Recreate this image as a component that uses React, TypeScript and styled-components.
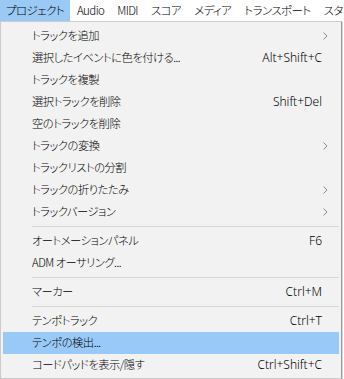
import React from "react";
import styled, { createGlobalStyle } from "styled-components";

const GlobalStyle = createGlobalStyle`
  html, body { margin: 0; padding: 0; background: #ffffff; }
  body {
    font-family: "Noto Sans", "Noto Sans CJK JP", sans-serif;
    font-size: 12px;
    color: #000;
  }
`;

const Page = styled.div`
  width: 344px;
  height: 379px;
  overflow: hidden;
  background: #ffffff;
`;

const MenuBar = styled.div`
  display: flex;
  height: 21px;
  align-items: stretch;
  white-space: nowrap;
  background: #ffffff;
`;

const BarItem = styled.div<{ $active?: boolean }>`
  display: flex;
  align-items: center;
  padding: 0 6px;
  margin-right: 1px;
  background: ${(p) => (p.$active ? "#99c9f4" : "transparent")};
  font-family: "Noto Sans CJK JP", "Noto Sans", sans-serif;
  font-weight: 300;
  font-size: 11.5px;
  letter-spacing: -0.6px;
  font-feature-settings: "palt";
  line-height: 1;
`;

const Menu = styled.div`
  width: 342px;
  height: 358px;
  box-sizing: border-box;
  background: #f2f2f2;
  border: 1px solid #cccccc;
  border-right-color: #9a9a9a;
  box-shadow: 1px 1px 0 #d8d8d8;
  padding: 3px 2px;
`;

const Row = styled.div<{ $hot?: boolean }>`
  display: flex;
  align-items: center;
  height: 22px;
  padding: 0 6px 0 29px;
  background: ${(p) => (p.$hot ? "#99c9f6" : "transparent")};
  white-space: nowrap;
`;

const Label = styled.span`
  flex: 1;
  font-family: "Noto Sans CJK JP", "Noto Sans", sans-serif;
  font-weight: 300;
  font-size: 11.3px;
  letter-spacing: -0.5px;
  font-feature-settings: "palt";
  line-height: 1;
`;

const Shortcut = styled.span`
  padding-right: 11px;
  font-family: "Noto Sans", "Open Sans", sans-serif;
  font-weight: 300;
  font-size: 12px;
  line-height: 1;
`;

const Arrow = styled.span`
  display: flex;
  width: 8px;
  justify-content: center;
  margin-right: 4px;
`;

const Separator = styled.div`
  height: 7px;
  display: flex;
  align-items: center;
  padding-left: 29px;
  &::after {
    content: "";
    flex: 1;
    height: 1px;
    background: #d7d7d7;
  }
`;

type Item =
  | { kind: "item"; label: string; shortcut?: string; sub?: boolean; hot?: boolean }
  | { kind: "sep" };

const items: Item[] = [
  { kind: "item", label: "トラックを追加", sub: true },
  { kind: "item", label: "選択したイベントに色を付ける...", shortcut: "Alt+Shift+C" },
  { kind: "item", label: "トラックを複製" },
  { kind: "item", label: "選択トラックを削除", shortcut: "Shift+Del" },
  { kind: "item", label: "空のトラックを削除" },
  { kind: "item", label: "トラックの変換", sub: true },
  { kind: "item", label: "トラックリストの分割" },
  { kind: "item", label: "トラックの折りたたみ", sub: true },
  { kind: "item", label: "トラックバージョン", sub: true },
  { kind: "sep" },
  { kind: "item", label: "オートメーションパネル", shortcut: "F6" },
  { kind: "item", label: "ADM オーサリング..." },
  { kind: "sep" },
  { kind: "item", label: "マーカー", shortcut: "Ctrl+M" },
  { kind: "sep" },
  { kind: "item", label: "テンポトラック", shortcut: "Ctrl+T" },
  { kind: "item", label: "テンポの検出...", hot: true },
  { kind: "item", label: "コードパッドを表示/隠す", shortcut: "Ctrl+Shift+C" },
];

const bar = ["プロジェクト", "Audio", "MIDI", "スコア", "メディア", "トランスポート", "スタジオ"];

const Chevron = () => (
  <svg width="5" height="8" viewBox="0 0 5 8">
    <path d="M0.5 0.5 L4 4 L0.5 7.5" fill="none" stroke="#8a8a8a" strokeWidth="1" />
  </svg>
);

export default function App() {
  return (
    <Page>
      <GlobalStyle />
      <MenuBar>
        {bar.map((b, i) => (
          <BarItem key={b} $active={i === 0}>
            {b}
          </BarItem>
        ))}
      </MenuBar>
      <Menu>
        {items.map((it, i) =>
          it.kind === "sep" ? (
            <Separator key={i} />
          ) : (
            <Row key={i} $hot={it.hot}>
              <Label>{it.label}</Label>
              {it.shortcut && <Shortcut>{it.shortcut}</Shortcut>}
              {it.sub && (
                <Arrow>
                  <Chevron />
                </Arrow>
              )}
            </Row>
          )
        )}
      </Menu>
    </Page>
  );
}
